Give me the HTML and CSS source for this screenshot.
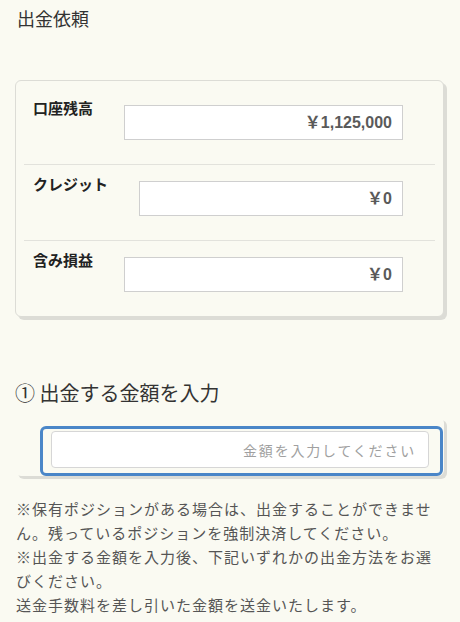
FILE: index.html
```html
<!DOCTYPE html>
<html lang="ja">
<head>
<meta charset="utf-8">
<title>出金依頼</title>
<link rel="stylesheet" href="styles.css">
</head>
<body>
<h1 class="page-title">出金依頼</h1>

<section class="balance-card">
  <div class="balance-row">
    <div class="balance-label">口座残高</div>
    <div class="balance-value">￥1,125,000</div>
  </div>
  <div class="balance-row">
    <div class="balance-label">クレジット</div>
    <div class="balance-value">￥0</div>
  </div>
  <div class="balance-row">
    <div class="balance-label">含み損益</div>
    <div class="balance-value">￥0</div>
  </div>
</section>

<h2 class="step-title">① 出金する金額を入力</h2>

<div class="amount-card">
  <div class="amount-focus">
    <input class="amount-input" type="text" placeholder="金額を入力してください">
  </div>
</div>

<p class="notes">※保有ポジションがある場合は、出金することができません。残っているポジションを強制決済してください。<br>※出金する金額を入力後、下記いずれかの出金方法をお選びください。<br>送金手数料を差し引いた金額を送金いたします。</p>
</body>
</html>
```

FILE: styles.css
```css
* { box-sizing: border-box; }

html, body {
  margin: 0;
  padding: 0;
  background: #fafaf2;
}

body {
  font-family: "Noto Sans CJK JP", "Noto Sans", sans-serif;
  color: #333;
  width: 460px;
  overflow: hidden;
}

.page-title {
  margin: 0;
  padding: 6px 0 0 17px;
  font-size: 18px;
  line-height: 24px;
  font-weight: normal;
  color: #333;
}

.balance-card {
  margin: 50px 0 0 15px;
  width: 429px;
  border: 1px solid #dcdcd6;
  border-radius: 6px;
  box-shadow: 3px 3px 0 #dcdcd6;
  padding: 8px 8px 0;
  background: #fafaf2;
}

.balance-row {
  display: flex;
  align-items: flex-start;
  gap: 31px;
  padding: 16px 32px 24px 9px;
  border-top: 1px solid #e2e2dc;
}

.balance-row:first-child {
  border-top: none;
  padding-top: 16px;
}

.balance-label {
  font-size: 15px;
  font-weight: bold;
  line-height: 20px;
  margin-top: -7px;
  color: #222;
  white-space: nowrap;
}

.balance-value {
  flex: 1;
  height: 35px;
  border: 1px solid #cfcfcf;
  background: #fff;
  text-align: right;
  padding: 0 10px;
  font-size: 16px;
  font-weight: bold;
  line-height: 33px;
  color: #5a5a5a;
  font-family: "Liberation Sans", "Noto Sans CJK JP", sans-serif;
}

.step-title {
  margin: 62px 0 0 15px;
  font-size: 20px;
  line-height: 28px;
  font-weight: normal;
  color: #333;
}

.amount-card {
  margin: 10px 0 0 15px;
  width: 429px;
  border-radius: 6px;
  box-shadow: 3px 3px 0 #dcdcd6;
  padding: 9px 1px 0 25px;
}

.amount-focus {
  border: 3px solid #4a86c8;
  border-radius: 6px;
  padding: 2px 11px 5px 8px;
  background: #fafaf2;
}

.amount-input {
  display: block;
  width: 100%;
  height: 37px;
  border: 1px solid #d6d6d6;
  border-radius: 4px;
  background: #fff;
  text-align: right;
  padding: 0 12px;
  font-family: "Noto Sans CJK JP", sans-serif;
  font-size: 14px;
  letter-spacing: 1.8px;
  color: #333;
  outline: none;
}

.amount-input::placeholder {
  color: #a0a0a0;
}

.notes {
  margin: 21px 0 0;
  padding: 0 16px;
  font-size: 15px;
  line-height: 24px;
  letter-spacing: 1px;
  color: #555;
}
```
